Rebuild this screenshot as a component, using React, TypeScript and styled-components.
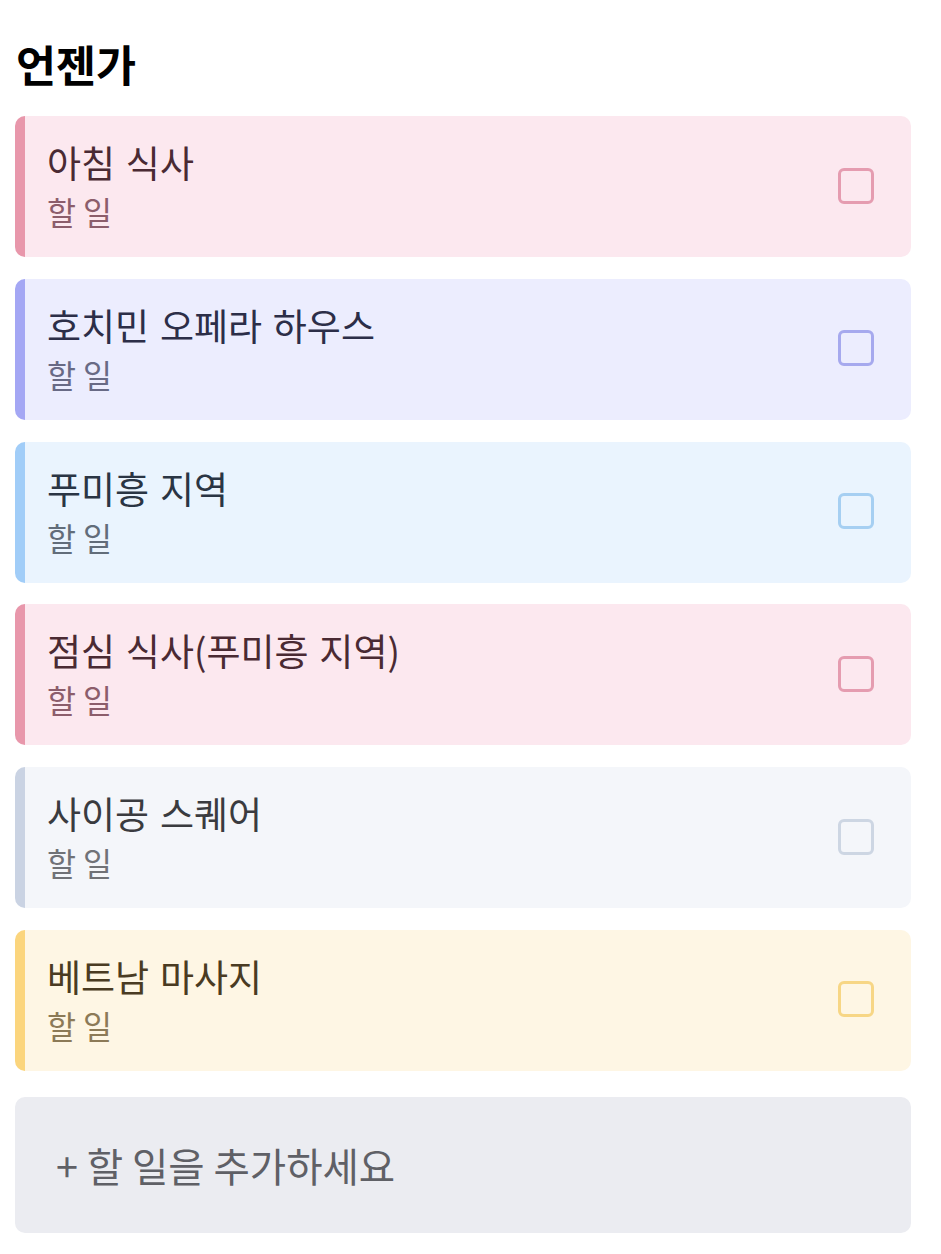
import React from "react";
import styled, { createGlobalStyle } from "styled-components";

const Global = createGlobalStyle`
  html, body { margin: 0; padding: 0; background: #ffffff; }
  body { font-family: "Noto Sans CJK KR", "Noto Sans", sans-serif; }
`;

const Page = styled.div`
  padding: 30px 30px 20px 15px;
  display: flex;
  flex-direction: column;
`;

const Heading = styled.h1`
  margin: 0 0 18px 1px;
  font-size: 43.5px;
  line-height: 68px;
  font-weight: 700;
  color: #000000;
`;

const List = styled.div`
  display: flex;
  flex-direction: column;
  gap: 21.8px;
`;

type Tone = { bg: string; bar: string; title: string; sub: string; box: string };

const Card = styled.div<{ $tone: Tone }>`
  display: flex;
  align-items: center;
  height: 141px;
  box-sizing: border-box;
  padding: 0 37px 2px 22px;
  border-radius: 10px;
  background: ${(p) => p.$tone.bg};
  border-left: 10px solid ${(p) => p.$tone.bar};
`;

const Texts = styled.div`
  flex: 1;
  display: flex;
  flex-direction: column;
`;

const Title = styled.div<{ $c: string }>`
  font-size: 37px;
  line-height: 52px;
  word-spacing: 2.5px;
  color: ${(p) => p.$c};
`;

const Sub = styled.div<{ $c: string }>`
  font-size: 31.5px;
  line-height: 47px;
  color: ${(p) => p.$c};
`;

const Box = styled.div<{ $c: string }>`
  width: 36px;
  height: 36px;
  box-sizing: border-box;
  border: 3px solid ${(p) => p.$c};
  border-radius: 6px;
`;

const AddButton = styled.div`
  margin-top: 26px;
  height: 136px;
  border-radius: 10px;
  background: #ebecf1;
  display: flex;
  align-items: center;
  padding-left: 41px;
  font-size: 39.5px;
  color: #5f6066;
`;

const pink: Tone = { bg: "#fce8ef", bar: "#e897ab", title: "#4a2a33", sub: "#8c5d6b", box: "#e59cb0" };
const lav: Tone = { bg: "#ecedfe", bar: "#a4a7f4", title: "#2c2e48", sub: "#686a85", box: "#a6a9ee" };
const blue: Tone = { bg: "#eaf4fe", bar: "#a1cdf8", title: "#2a3544", sub: "#626d7a", box: "#a6cff2" };
const grey: Tone = { bg: "#f4f6fa", bar: "#cad3e3", title: "#3a3b3f", sub: "#707277", box: "#cdd6e3" };
const yellow: Tone = { bg: "#fef6e4", bar: "#fbd57d", title: "#4a3b22", sub: "#8c7a57", box: "#f7d685" };

const items: { title: string; tone: Tone }[] = [
  { title: "아침 식사", tone: pink },
  { title: "호치민 오페라 하우스", tone: lav },
  { title: "푸미흥 지역", tone: blue },
  { title: "점심 식사(푸미흥 지역)", tone: pink },
  { title: "사이공 스퀘어", tone: grey },
  { title: "베트남 마사지", tone: yellow },
];

export default function App() {
  return (
    <>
      <Global />
      <Page>
        <Heading>언젠가</Heading>
        <List>
          {items.map((it, i) => (
            <Card key={i} $tone={it.tone}>
              <Texts>
                <Title $c={it.tone.title}>{it.title}</Title>
                <Sub $c={it.tone.sub}>할 일</Sub>
              </Texts>
              <Box $c={it.tone.box} />
            </Card>
          ))}
        </List>
        <AddButton>+ 할 일을 추가하세요</AddButton>
      </Page>
    </>
  );
}
